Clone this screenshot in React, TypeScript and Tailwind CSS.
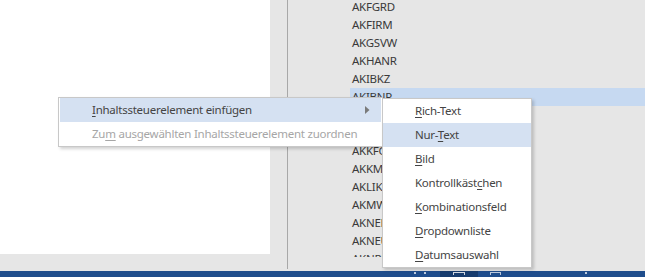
import type { ReactNode } from 'react';

const font = { fontFamily: '"Noto Sans", "Open Sans", sans-serif' };

const rows = [
  'AKFGRD', 'AKFIRM', 'AKGSVW', 'AKHANR', 'AKIBKZ', 'AKIBNP', 'AKIBST', 'AKJAHR',
  'AKKFGR', 'AKKMNR', 'AKLIKZ', 'AKMWST', 'AKNEBK', 'AKNEUE', 'AKNRKR',
];

function Acc({ before, key1, after }: { before: string; key1: string; after: string }) {
  return (
    <span>
      {before}
      <span className="underline underline-offset-2">{key1}</span>
      {after}
    </span>
  );
}

function MenuItem({ children, active, disabled, arrow }: { children: ReactNode; active?: boolean; disabled?: boolean; arrow?: boolean }) {
  return (
    <div
      className={`h-[24px] flex items-center pl-[32px] pr-[10px] ${active ? 'bg-[#d5e1f2]' : ''} ${disabled ? 'text-[#a6a6a6]' : 'text-[#444444]'}`}
    >
      <span className="flex-1 whitespace-nowrap">{children}</span>
      {arrow && (
        <svg width="5" height="8" viewBox="0 0 5 8" className="mr-[1px]">
          <path d="M0 0 L4.5 4 L0 8 Z" fill="#7a7a7a" />
        </svg>
      )}
    </div>
  );
}

export default function App() {
  return (
    <div className="w-[645px] h-[277px] relative overflow-hidden bg-[#e6e6e6] flex flex-col text-[11.5px] tracking-[-0.25px]" style={font}>
      <div className="flex h-[271px]">
        {/* document page */}
        <div className="w-[270px] h-[254px] bg-white" />
        <div className="w-[17px]" />
        <div className="w-[1px] h-[269px] bg-[#a8a8a8]" />
        {/* field list */}
        <div className="flex-1 pl-[62px] h-[257px] overflow-hidden">
          <div className="-mt-[2px] flex flex-col">
            {rows.map((r) => (
              <div
                key={r}
                className={`h-[18px] flex items-center pl-[2px] text-[#3a3a3a] ${r === 'AKIBNP' ? 'bg-[#c6d9f1]' : ''}`}
              >
                {r}
              </div>
            ))}
          </div>
        </div>
      </div>

      {/* status bar */}
      <div className="h-[6px] bg-[#1f4d8c] flex items-start">
        <div className="w-[414px]" />
        <div className="w-[12px] h-[2px] mt-[1px] border-x-2 border-white/70" />
        <div className="w-[14px]" />
        <div className="w-[38px] h-[6px] bg-[#173c6e] flex justify-center">
          <div className="w-[12px] h-[3px] mt-[1px] border-x border-t border-white/80" />
        </div>
        <div className="w-[12px]" />
        <div className="w-[11px] h-[3px] mt-[1px] border-x border-t border-white/70" />
        <div className="w-[84px]" />
        <div className="w-[2px] h-[2px] mt-[1px] bg-white/70" />
      </div>

      {/* context menu */}
      <div className="absolute left-[58px] top-[97px] w-[325px] bg-white border border-[#c8c8c8] shadow-[2px_2px_3px_rgba(0,0,0,0.18)] px-[1px]">
        <MenuItem active arrow>
          <Acc before="" key1="I" after="nhaltssteuerelement einfügen" />
        </MenuItem>
        <MenuItem disabled>
          <Acc before="Zu" key1="m" after=" ausgewählten Inhaltssteuerelement zuordnen" />
        </MenuItem>
      </div>

      {/* submenu */}
      <div className="absolute left-[382px] top-[98px] w-[150px] bg-white border border-[#c8c8c8] shadow-[2px_2px_3px_rgba(0,0,0,0.18)]">
        <MenuItem><Acc before="" key1="R" after="ich-Text" /></MenuItem>
        <MenuItem active><Acc before="Nur-" key1="T" after="ext" /></MenuItem>
        <MenuItem><Acc before="" key1="B" after="ild" /></MenuItem>
        <MenuItem><Acc before="Kontrollkäst" key1="c" after="hen" /></MenuItem>
        <MenuItem><Acc before="" key1="K" after="ombinationsfeld" /></MenuItem>
        <MenuItem><Acc before="" key1="D" after="ropdownliste" /></MenuItem>
        <MenuItem><Acc before="" key1="D" after="atumsauswahl" /></MenuItem>
      </div>
    </div>
  );
}
